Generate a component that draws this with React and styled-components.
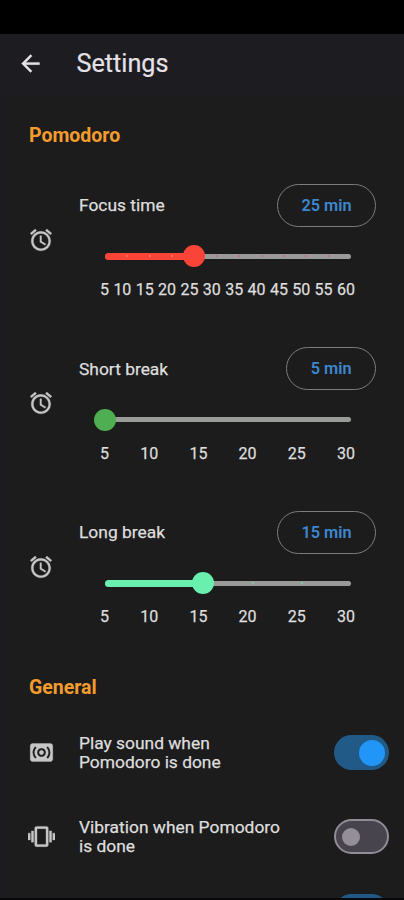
import React from 'react';
import styled, { createGlobalStyle } from 'styled-components';
import { MdAlarm, MdArrowBack, MdSurroundSound, MdVibration } from 'react-icons/md';

const range = (min, max) => {
  const values = [];
  for (let v = min; v <= max; v += 5) values.push(v);
  return values;
};

const timers = [
  { name: 'Focus time', value: 25, max: 60, color: '#fb4438', tick: '#e0527a' },
  { name: 'Short break', value: 5, max: 30, color: '#4eae51', tick: '#9a9c99' },
  { name: 'Long break', value: 15, max: 30, color: '#6af0ae', tick: '#6fe0ab' },
];

const TimerSetting = ({ name, value, max, color, tick }) => {
  const steps = range(5, max);
  const percent = ((value - 5) / (max - 5)) * 100;

  return (
    <TimerRow>
      <MdAlarm size={26} />
      <div>
        <TimerHead>
          <Label>{name}</Label>
          <Pill>{value} min</Pill>
        </TimerHead>
        <Slider>
          <Track />
          <ActiveTrack $color={color} style={{ width: `${percent}%` }} />
          {steps.slice(1, -1).map((step) => (
            <Tick
              key={step}
              $color={step < value ? '#ff8a7c' : tick}
              $hidden={step < value && max === 30}
              style={{ left: `${((step - 5) / (max - 5)) * 100}%` }}
            />
          ))}
          <Thumb $color={color} style={{ left: `${percent}%` }} />
        </Slider>
        <Scale>
          {steps.map((step) => (
            <span key={step}>{step}</span>
          ))}
        </Scale>
      </div>
    </TimerRow>
  );
};

const SwitchSetting = ({ icon, checked, compact, children }) => (
  <SwitchRow $compact={compact}>
    {icon}
    <Label>{children}</Label>
    <Switch $checked={checked}>
      <Knob $checked={checked} />
    </Switch>
  </SwitchRow>
);

const App = () => (
  <Screen>
    <GlobalStyle />
    <StatusBar />
    <AppBar>
      <MdArrowBack size={27} />
      <Title>Settings</Title>
    </AppBar>
    <Content>
      <SectionTitle>Pomodoro</SectionTitle>
      <Timers>
        {timers.map((timer) => (
          <TimerSetting key={timer.name} {...timer} />
        ))}
      </Timers>
      <SectionTitle>General</SectionTitle>
      <Switches>
        <SwitchSetting icon={<MdSurroundSound size={27} />} checked>
          Play sound when
          <br />
          Pomodoro is done
        </SwitchSetting>
        <SwitchSetting icon={<MdVibration size={27} />}>
          Vibration when Pomodoro
          <br />
          is done
        </SwitchSetting>
        <SwitchSetting icon={<i />} checked compact />
      </Switches>
    </Content>
    <BottomEdge />
  </Screen>
);

const GlobalStyle = createGlobalStyle`
  body {
    margin: 0;
    background: #1c1c1c;
    overflow: hidden;
  }

  * {
    box-sizing: border-box;
  }
`;

const Screen = styled.div`
  display: flex;
  flex-direction: column;
  width: 404px;
  height: 900px;
  overflow: hidden;
  background: linear-gradient(90deg, #1c1c20 7px, #1c1c1c 8px);
  color: #dedede;
  font-family: Roboto, 'Liberation Sans', sans-serif;

  svg {
    flex: none;
    display: block;
  }

  svg path:not([fill='none']) {
    stroke: currentColor;
    stroke-width: 0.3px;
  }
`;

const StatusBar = styled.div`
  flex: none;
  height: 34px;
  background: #000;
`;

const AppBar = styled.header`
  flex: none;
  display: flex;
  align-items: center;
  gap: 33px;
  height: 63px;
  padding: 0 16.5px 4px;
  background: #1c1c21;
  color: #e4e2e6;
`;

const Title = styled.h1`
  margin: 0;
  font-size: 25.2px;
  font-weight: 400;
  line-height: 30px;
  -webkit-text-stroke: 0.2px currentColor;
`;

const Content = styled.main`
  flex: 1;
  min-height: 0;
  overflow: hidden;
  padding: 27px 0 0 28px;
`;

const SectionTitle = styled.h2`
  margin: 0 0 0 1px;
  font-size: 19.5px;
  font-weight: 700;
  line-height: 24px;
  color: #f39c2d;
`;

const Timers = styled.div`
  padding: 36px 0 2px;
`;

const TimerRow = styled.div`
  display: grid;
  grid-template-columns: 26px 297px;
  column-gap: 25px;
  height: 163.4px;

  > svg {
    margin-top: 43px;
    color: #c6c6c6;
  }
`;

const TimerHead = styled.div`
  display: flex;
  align-items: center;
  justify-content: space-between;
  height: 43px;
`;

const Label = styled.span`
  padding-top: 1px;
  font-size: 17.4px;
  line-height: 19.5px;
  white-space: nowrap;
  -webkit-text-stroke: 0.25px currentColor;
`;

const Pill = styled.button`
  height: 43px;
  padding: 0 23.5px;
  border: 1px solid #7d7d7d;
  border-radius: 22px;
  background: none;
  color: #3c87d0;
  font-family: inherit;
  font-size: 16.3px;
  font-weight: 600;
`;

const Slider = styled.div`
  position: relative;
  display: flex;
  align-items: center;
  width: 246px;
  height: 22px;
  margin: 18.4px 0 0 26px;
`;

const Track = styled.div`
  width: 100%;
  height: 5px;
  border-radius: 3px;
  background: #999b99;
`;

const ActiveTrack = styled.div`
  position: absolute;
  left: 0;
  height: 7px;
  border-radius: 4px;
  background: ${({ $color }) => $color};
`;

const Tick = styled.div`
  position: absolute;
  width: 2px;
  height: 2px;
  margin-left: -1px;
  border-radius: 50%;
  background: ${({ $color }) => $color};
  opacity: ${({ $hidden }) => ($hidden ? 0 : 0.8)};
`;

const Thumb = styled.div`
  position: absolute;
  width: 22px;
  height: 22px;
  margin-left: -11px;
  border-radius: 50%;
  background: ${({ $color }) => $color};
`;

const Scale = styled.div`
  display: flex;
  justify-content: space-between;
  width: 255px;
  margin: 12.8px 0 0 21px;
  font-size: 16px;
  line-height: 20px;
  -webkit-text-stroke: 0.25px currentColor;
`;

const Switches = styled.div`
  padding-top: 10.5px;
`;

const SwitchRow = styled.div`
  display: grid;
  grid-template-columns: 27px 1fr 55px;
  align-items: center;
  column-gap: 24px;
  height: ${({ $compact }) => ($compact ? 66 : 84)}px;
  padding-right: 15px;

  > svg {
    color: #c6c6c6;
  }
`;

const Switch = styled.div`
  display: flex;
  align-items: center;
  justify-content: ${({ $checked }) => ($checked ? 'flex-end' : 'flex-start')};
  height: 35px;
  padding: ${({ $checked }) => ($checked ? '0 4px' : '0 6px')};
  border: ${({ $checked }) => ($checked ? 'none' : '2px solid #918c96')};
  border-radius: 18px;
  background: ${({ $checked }) => ($checked ? '#225a87' : '#48444e')};
`;

const Knob = styled.div`
  width: ${({ $checked }) => ($checked ? 26 : 18)}px;
  height: ${({ $checked }) => ($checked ? 26 : 18)}px;
  border-radius: 50%;
  background: ${({ $checked }) => ($checked ? '#2196f8' : '#938e98')};
`;

const BottomEdge = styled.div`
  flex: none;
  height: 2px;
  background: #08080b;
`;

export default App;
